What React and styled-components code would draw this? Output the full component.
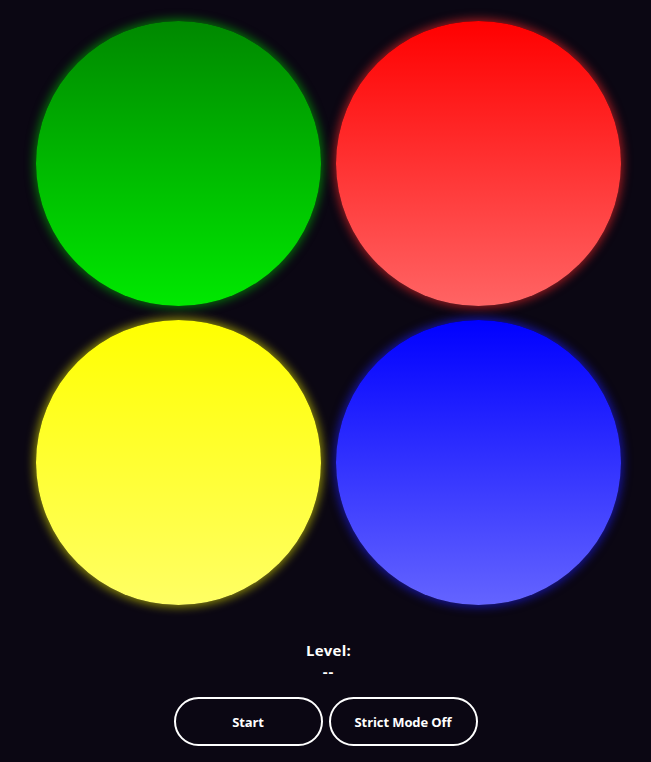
import React, { useState } from "react";
import styled, { createGlobalStyle } from "styled-components";

const GlobalStyle = createGlobalStyle`
  html, body {
    margin: 0;
    padding: 0;
    background-color: #0b0713;
  }
  body {
    font-family: "Open Sans", "DejaVu Sans", sans-serif;
    color: #ffffff;
  }
`;

const PADS = [
  { key: "green", from: "#008800", to: "#00e800", glow: "rgba(0, 200, 0, 0.55)" },
  { key: "red", from: "#ff0000", to: "#ff6464", glow: "rgba(255, 40, 40, 0.6)" },
  { key: "yellow", from: "#ffff00", to: "#ffff64", glow: "rgba(230, 230, 0, 0.6)" },
  { key: "blue", from: "#0000ff", to: "#6464ff", glow: "rgba(30, 30, 255, 0.6)" },
];

const PageWrap = styled.div`
  width: 651px;
  height: 762px;
  display: flex;
  flex-direction: column;
  align-items: center;
  padding-top: 21px;
  padding-left: 6px;
  box-sizing: border-box;
`;

const Board = styled.div`
  display: grid;
  grid-template-columns: 285px 285px;
  column-gap: 15px;
  row-gap: 14px;
`;

const Pad = styled.div`
  width: 285px;
  height: 285px;
  border-radius: 50%;
  background: linear-gradient(to bottom, ${(p) => p.$from}, ${(p) => p.$to});
  box-shadow: 0 0 10px 2px ${(p) => p.$glow};
  cursor: pointer;
`;

const LevelBox = styled.div`
  margin-top: 35px;
  display: flex;
  flex-direction: column;
  align-items: center;
  font-weight: 700;
  font-size: 15px;
  line-height: 21px;
  letter-spacing: 0.2px;
`;

const Dashes = styled.div`
  letter-spacing: 1px;
`;

const Controls = styled.div`
  margin-top: 15px;
  margin-right: 6px;
  display: flex;
  gap: 6px;
`;

const Button = styled.button`
  width: 149px;
  height: 49px;
  border-radius: 25px;
  border: 2px solid #ffffff;
  background: transparent;
  color: #ffffff;
  font-family: "Open Sans", "DejaVu Sans", sans-serif;
  font-weight: 700;
  font-size: 13px;
  letter-spacing: -0.1px;
  cursor: pointer;
`;

export default function App() {
  const [strict, setStrict] = useState(false);
  const [level] = useState("--");
  return (
    <>
      <GlobalStyle />
      <PageWrap>
        <Board>
          {PADS.map((pad) => (
            <Pad key={pad.key} $from={pad.from} $to={pad.to} $glow={pad.glow} />
          ))}
        </Board>
        <LevelBox>
          <div>Level:</div>
          <Dashes>{level}</Dashes>
        </LevelBox>
        <Controls>
          <Button>Start</Button>
          <Button onClick={() => setStrict(!strict)}>
            Strict Mode {strict ? "On" : "Off"}
          </Button>
        </Controls>
      </PageWrap>
    </>
  );
}
